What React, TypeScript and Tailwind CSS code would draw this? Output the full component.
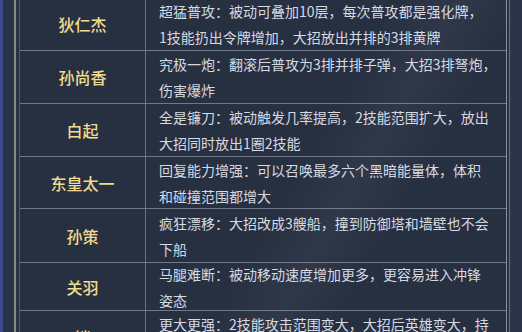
import React from 'react';

interface HeroRow {
  name: string;
  lines: string[];
  h: string;
}

const rows: HeroRow[] = [
  {
    name: '狄仁杰',
    lines: ['超猛普攻：被动可叠加10层，每次普攻都是强化牌，', '1技能扔出令牌增加，大招放出并排的3排黄牌'],
    h: 'h-[54px] -mt-[3px]',
  },
  {
    name: '孙尚香',
    lines: ['究极一炮：翻滚后普攻为3排并排子弹，大招3排弩炮，', '伤害爆炸'],
    h: 'h-[53px]',
  },
  {
    name: '白起',
    lines: ['全是镰刀：被动触发几率提高，2技能范围扩大，放出', '大招同时放出1圈2技能'],
    h: 'h-[53px]',
  },
  {
    name: '东皇太一',
    lines: ['回复能力增强：可以召唤最多六个黑暗能量体，体积', '和碰撞范围都增大'],
    h: 'h-[52px]',
  },
  {
    name: '孙策',
    lines: ['疯狂漂移：大招改成3艘船，撞到防御塔和墙壁也不会', '下船'],
    h: 'h-[54px]',
  },
  {
    name: '关羽',
    lines: ['马腿难断：被动移动速度增加更多，更容易进入冲锋', '姿态'],
    h: 'h-[48px]',
  },
  {
    name: '铠',
    lines: ['更大更强：2技能攻击范围变大，大招后英雄变大，持', '续时间更长'],
    h: 'h-[52px]',
  },
];

export default function App() {
  return (
    <div
      className="w-[522px] h-[332px] overflow-hidden flex bg-[#2b3446]"
      style={{ fontFamily: '"Noto Sans CJK SC", "Noto Sans", sans-serif' }}
    >
      {/* 左侧边框 */}
      <div className="w-[3px] shrink-0 bg-[#3d4b8e]" />
      <div className="w-[11px] shrink-0 bg-[#2b3446]" />
      <div className="w-[2px] shrink-0 bg-[#7f8b89]" />
      <div className="w-[3px] shrink-0 bg-[#2a3343]" />

      {/* 表格 */}
      <div className="w-[488px] shrink-0 border-l border-r border-l-[#4d5768] border-r-[#8a93a2] bg-[#273041] relative overflow-hidden">
        <div className="absolute inset-0 pointer-events-none bg-[linear-gradient(120deg,transparent_0%,transparent_55%,rgba(255,255,255,0.04)_65%,transparent_75%)]" />
        {rows.map((row) => (
          <div key={row.name} className={`flex border-b border-[#6f7888] ${row.h}`}>
            <div className="w-[126px] shrink-0 flex items-center justify-center border-r border-[#6a7383] text-[16px] text-[#efdc8e] font-medium">
              {row.name}
            </div>
            <div className="flex-1 flex flex-col justify-center pl-[13px] text-[14px] leading-[26px] text-[#d6dae2] whitespace-nowrap">
              {row.lines.map((l, i) => (
                <div key={i}>{l}</div>
              ))}
            </div>
          </div>
        ))}
      </div>

      {/* 右侧边框 */}
      <div className="w-[2px] shrink-0 bg-[#262e3e]" />
      <div className="w-[1px] shrink-0 bg-[#6c7484]" />
      <div className="flex-1 bg-[#2c3447]" />
    </div>
  );
}
